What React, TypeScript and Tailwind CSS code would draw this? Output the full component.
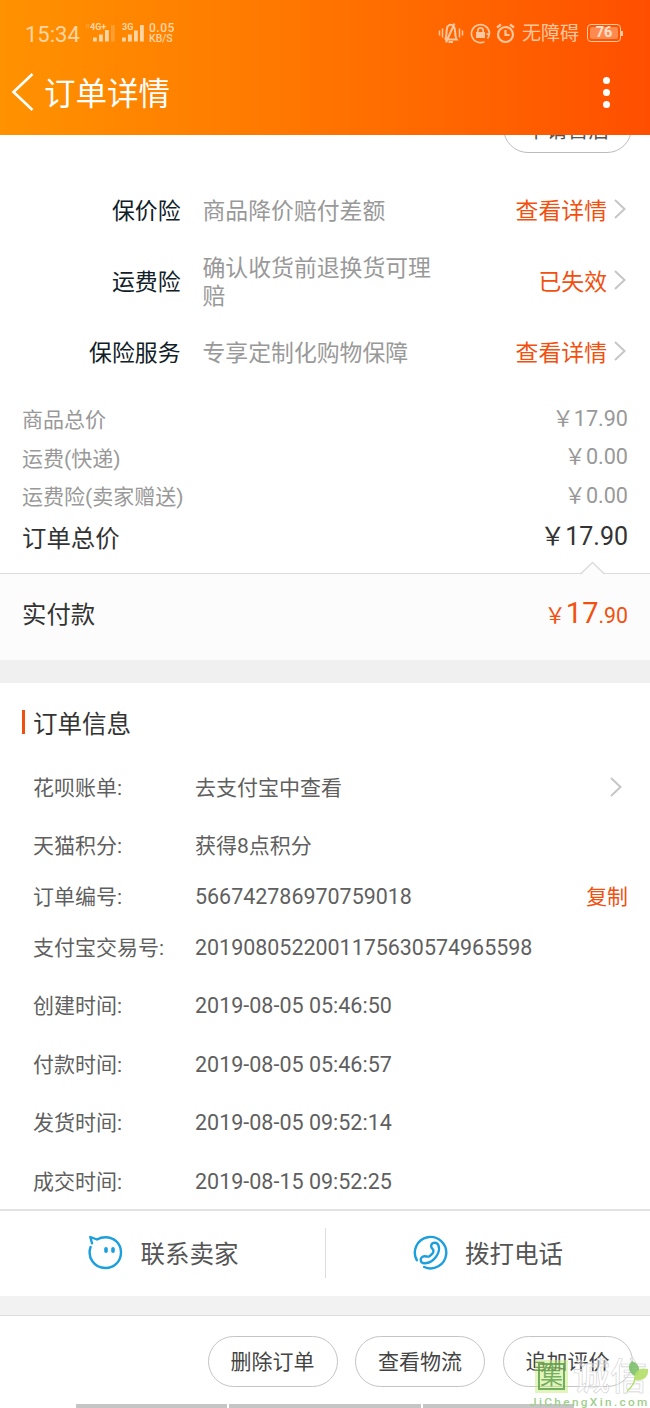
import React from 'react';

const insurances = [
  { name: '保价险', desc: '商品降价赔付差额', action: '查看详情' },
  { name: '运费险', desc: '确认收货前退换货可理赔', action: '已失效' },
  { name: '保险服务', desc: '专享定制化购物保障', action: '查看详情' },
];

const prices = [
  { name: '商品总价', value: '17.90' },
  { name: '运费(快递)', value: '0.00' },
  { name: '运费险(卖家赠送)', value: '0.00' },
];

const orderInfo = [
  { name: '花呗账单:', value: '去支付宝中查看', row: 'h-[59px] text-[21px]', arrow: true },
  { name: '天猫积分:', value: '获得8点积分', row: 'h-[58px] text-[21px]' },
  { name: '订单编号:', value: '566742786970759018', row: 'h-[43px] text-[21.45px]', copy: true },
  { name: '支付宝交易号:', value: '2019080522001175630574965598', row: 'h-[59px] text-[21.45px]' },
  { name: '创建时间:', value: '2019-08-05 05:46:50', row: 'h-[58px] text-[21.5px]' },
  { name: '付款时间:', value: '2019-08-05 05:46:57', row: 'h-[58.5px] text-[21.5px]' },
  { name: '发货时间:', value: '2019-08-05 09:52:14', row: 'h-[58.5px] text-[21.5px]' },
  { name: '成交时间:', value: '2019-08-15 09:52:25', row: 'h-[58.5px] text-[21.5px]' },
];

const actions = ['删除订单', '查看物流', '追加评价'];

const ChevronRight: React.FC<{ className?: string }> = ({ className }) => (
  <svg className={className} width="12" height="20" viewBox="0 0 12 20" fill="none" stroke="#c6c6c6" strokeWidth="2">
    <path d="M1 1l9.5 9L1 19" />
  </svg>
);

const Signal: React.FC<{ label: string; weak?: boolean }> = ({ label, weak }) => (
  <div className="relative h-[19px] w-[23px]">
    <span className={`absolute -top-[1px] text-[9px] leading-[9px] font-bold ${weak ? '-left-[3px]' : 'left-0'}`}>{label}</span>
    <svg className="absolute inset-0" width="23" height="19" viewBox="0 0 23 19" fill="currentColor">
      <rect x="0" y="13.5" width="3.8" height="4" />
      <rect x="6" y="10.5" width="3.8" height="7" />
      <rect x="12" y={weak ? 6 : 6.5} width="3.8" height={weak ? 11.5 : 11} />
      <rect x="18" y="1" width="3.8" height="16.5" opacity={weak ? 0.3 : 1} />
    </svg>
  </div>
);

const StatusBar: React.FC = () => (
  <div className="flex h-[66px] items-center pl-[25px] pr-[27px] text-[#ffd5a3]">
    <span className="w-[61px] pt-[3px] text-[22px] leading-6">15:34</span>
    <span className="w-[7px] self-start pt-[22px] text-[7px] leading-[9px] opacity-50">ıı</span>
    <div className="flex gap-[6px]">
      <Signal label="4G+" weak />
      <Signal label="3G" />
    </div>
    <div className="ml-[4px] font-medium">
      <div className="text-[12px] leading-[11px] tracking-[0.5px]">0.05</div>
      <div className="text-[10.5px] leading-[10px]">KB/S</div>
    </div>
    <div className="ml-auto flex items-center text-[#ffc79f]">
      <svg width="26" height="22" viewBox="0 0 26 22" fill="none" stroke="currentColor" strokeWidth="2">
        <path d="M1.500 8.500v5M4.500 6.500v9M21.500 6.500v9M24.500 8.500v5" strokeWidth="1.500" />
        <path d="M7 17.500C9.500 14 7.500 7 10 4c1.500-1.600 4-1.600 5.500 0 2.700 3 .7 10 3.200 13.500H7M10.500 20h4.500M8 20.500L16.500 1.500" />
      </svg>
      <svg className="ml-[6px]" width="21" height="21" viewBox="0 0 21 21" fill="none" stroke="currentColor" strokeWidth="1.7">
        <path d="M14.500 18.700A9 9 0 1 1 19.300 9M19.300 8.500A9 9 0 0 1 17.500 15.500M16.500 11.500l3.500-1.500" />
        <rect x="6" y="9" width="9" height="6" fill="currentColor" stroke="none" />
        <path d="M7.800 9V7.500a2.700 2.700 0 0 1 5.400 0V9" />
      </svg>
      <svg className="ml-[5px]" width="19" height="21" viewBox="0 0 19 21" fill="none" stroke="currentColor" strokeWidth="2.200">
        <circle cx="9.500" cy="11.500" r="7.500" />
        <path d="M9.500 7v5h4M1 4.500l4-3M18 4.500l-4-3" />
      </svg>
      <span className="ml-[7px] pt-[2px] text-[19px] leading-6">无障碍</span>
      <div className="ml-[8px] flex h-[18px] w-[34px] rounded-[4px] border border-current p-[2px]">
        <div className="flex w-[28px] items-center justify-center rounded-[2px] bg-[#ff8a50] text-[14.500px] leading-none font-bold text-[#ffe0cc]">76</div>
      </div>
      <div className="h-[5px] w-[2px] bg-current" />
    </div>
  </div>
);

const Header: React.FC = () => (
  <header className="relative z-10 h-[135px] bg-linear-to-r from-[#ff9200] to-[#ff4e00]">
    <StatusBar />
    <div className="flex h-[52px] items-center pl-[11px] pr-[40px] text-white">
      <svg width="23" height="40" viewBox="0 0 23 40" fill="none" stroke="currentColor" strokeWidth="2.6">
        <path d="M21.500 2L2.500 20l19 18" />
      </svg>
      <h1 className="ml-[10px] pt-[5px] text-[31.500px] leading-10">订单详情</h1>
      <div className="ml-auto flex flex-col gap-[5px]">
        <span className="size-[7px] rounded-full bg-white" />
        <span className="size-[7px] rounded-full bg-white" />
        <span className="size-[7px] rounded-full bg-white" />
      </div>
    </div>
  </header>
);

const ContactBar: React.FC = () => (
  <div className="flex h-[87px] items-center border-t-2 border-[#e2e2e2] text-[24.500px] text-[#555]">
    <div className="flex w-[325px] items-center pl-[88px]">
      <svg className="-mt-[2px]" width="35" height="36" viewBox="0 0 35 36" fill="none" stroke="#1c9fdd" strokeWidth="2.400" strokeLinejoin="round" strokeLinecap="round">
        <path d="M2.600 13C-1 23 6 34 17.500 34C26 34 33 27.500 33 18.500S26 3.200 17.500 3.200C14 3.200 11.500 4 9 5.500L2.300 3L4 9.300" />
        <path d="M18 14.800v2.400M25 14.800v2.400" strokeWidth="3.600" />
      </svg>
      <span className="ml-[17.500px] pt-[3px] leading-8">联系卖家</span>
    </div>
    <div className="h-[50px] w-px bg-[#ddd]" />
    <div className="flex items-center pl-[86.500px]">
      <svg className="-mt-[2px]" width="35" height="36" viewBox="0 0 35 36" fill="none" stroke="#1c9fdd" strokeWidth="2.400" strokeLinecap="round" strokeLinejoin="round">
        <path d="M3.800 26.200A15.700 15.700 0 1 1 11.200 33" />
        <path d="M18.500 13.500C16.500 9 23.500 6.500 25.500 11.500C28 19 20.500 28.500 12 29.300C6.500 29.500 6.300 22.500 11.500 22.300C13.500 22.200 15 23.300 16.500 22.200C19 20.500 21 18.500 20.300 16.200C20 15 19 14.700 18.500 13.500Z" />
      </svg>
      <span className="ml-[17.500px] pt-[3px] leading-8">拨打电话</span>
    </div>
  </div>
);

const Watermark: React.FC = () => (
  <div className="absolute right-0 bottom-0 h-[50px] w-[122px]">
    <div className="absolute top-[2px] left-[7px] size-[33px] bg-[#c6ec7c]/50 p-[3px]">
      <div className="flex size-full items-center justify-center border-2 border-[#599b48]/80 text-[23px] leading-none text-[#599b48]/80">集</div>
    </div>
    <span className="absolute top-[2px] left-[45px] text-[37px] leading-[36px] font-medium whitespace-nowrap text-white/40 [-webkit-text-stroke:0.6px_#cfcfcf]">诚信</span>
    <svg className="absolute top-[3px] left-[98px]" width="24" height="34" viewBox="0 0 24 34">
      <path d="M9 15C2 12 1 4 6 0c6 2 9 7 6 14z" fill="#75bd63" opacity=".85" />
      <path d="M8 17c1-8 6-11 14-9 1 8-5 13-14 11z" fill="#b2df68" opacity=".9" />
      <path d="M9 17C8 24 5 27 1 30" stroke="#b2df68" strokeWidth="1.500" fill="none" />
    </svg>
    <span className="absolute bottom-0 left-[2px] text-[11.800px] leading-[12px] font-medium tracking-[2.350px] whitespace-nowrap text-[#9fce8d]">JiChengXin.com</span>
  </div>
);

const App: React.FC = () => {
  return (
    <div className="relative h-[1408px] w-[650px] overflow-hidden bg-white font-[Roboto,'Noto_Sans_CJK_SC',sans-serif]">
      <Header />
      <div className="-mt-[32px] flex h-[72.500px] items-start justify-end pr-[18px]">
        <div className="flex h-[50px] w-[129px] items-center justify-center rounded-full border border-[#bbb] pt-[6px] text-[20.900px] text-[#555]">
          申请售后
        </div>
      </div>

      <section className="text-[22.850px] leading-[28px]">
        {insurances.map((item) => (
          <div key={item.name} className="flex h-[71px] items-center pt-[2px] pr-[24px]">
            <span className="w-[180.500px] text-right text-[#102027]">{item.name}</span>
            <span className="ml-[22px] w-[235px] text-[#999]">{item.desc}</span>
            <span className="ml-auto text-[#f2500f]">{item.action}</span>
            <ChevronRight className="ml-[7px] -mt-[6px]" />
          </div>
        ))}
      </section>

      <section className="mt-[11px] h-[173px] px-[22px] text-[21px] text-[#999]">
        {prices.map((item) => (
          <div key={item.name} className="flex h-[38.500px] items-center justify-between">
            <span className="pt-[4px]">{item.name}</span>
            <span className="text-[21.600px]">￥{item.value}</span>
          </div>
        ))}
        <div className="flex h-[44px] items-center justify-between text-[24.400px] text-[#333]">
          <span className="pt-[4px]">订单总价</span>
          <span className="text-[25px]">￥{prices[0].value}</span>
        </div>
      </section>

      <section className="relative flex h-[87px] items-center justify-between border-t border-[#ddd] bg-[#fcfcfc] px-[22px] pb-[5px]">
        <svg className="absolute -top-[13px] left-[580px]" width="25" height="14" viewBox="0 0 25 14">
          <path d="M0 12.500h2L12.500 1.500L23 12.500h2v1.500H0z" fill="#fcfcfc" />
          <path d="M0 12.500h1L12.500 1.500L24 12.500h1" fill="none" stroke="#ddd" strokeWidth="1.500" />
        </svg>
        <span className="pt-[2px] text-[24.400px] text-[#333]">实付款</span>
        <span className="text-[21.300px] text-[#f2500f]">
          ￥<span className="text-[29px]">17</span>.90
        </span>
      </section>
      <div className="h-[23px] bg-[#f0f0f0]" />

      <section className="h-[526px] pt-[26px]">
        <div className="flex h-[27px] items-center pl-[22px]">
          <div className="h-[24px] w-[3px] bg-[#f2500f]" />
          <h2 className="ml-[8px] pt-[6px] text-[24.500px] text-[#333]">订单信息</h2>
        </div>
        <div className="mt-[23px] text-[#5f5f5f]">
          {orderInfo.map((item) => (
            <div key={item.name} className={`flex items-center pr-[22px] pl-[33px] ${item.row}`}>
              <span className="w-[162px] pt-[1px] text-[21px]">{item.name}</span>
              <span className={item.arrow ? 'pt-[1px]' : ''}>{item.value}</span>
              {item.arrow && <ChevronRight className="-mt-[3px] mr-[6px] ml-auto" />}
              {item.copy && <span className="ml-auto pt-[1px] text-[20.900px] text-[#f2500f]">复制</span>}
            </div>
          ))}
        </div>
      </section>

      <ContactBar />
      <div className="h-[20px] border-b border-[#ddd] bg-[#f2f2f2]" />
      <div className="flex justify-end gap-[17.500px] pt-[20px] pr-[17.500px]">
        {actions.map((label) => (
          <button key={label} className="h-[51px] w-[130px] rounded-full border border-[#c4c4c4] pt-[4px] text-[21px] text-[#444]">
            {label}
          </button>
        ))}
      </div>
      <div className="mt-[17px] ml-[76px] flex gap-[2px]">
        <div className="h-[4px] w-[151px] bg-[#c5c5c5]" />
        <div className="h-[4px] w-[192px] bg-[#c5c5c5]" />
        <div className="h-[4px] w-[151px] bg-[#c5c5c5]" />
      </div>
      <Watermark />
    </div>
  );
};

export default App;
